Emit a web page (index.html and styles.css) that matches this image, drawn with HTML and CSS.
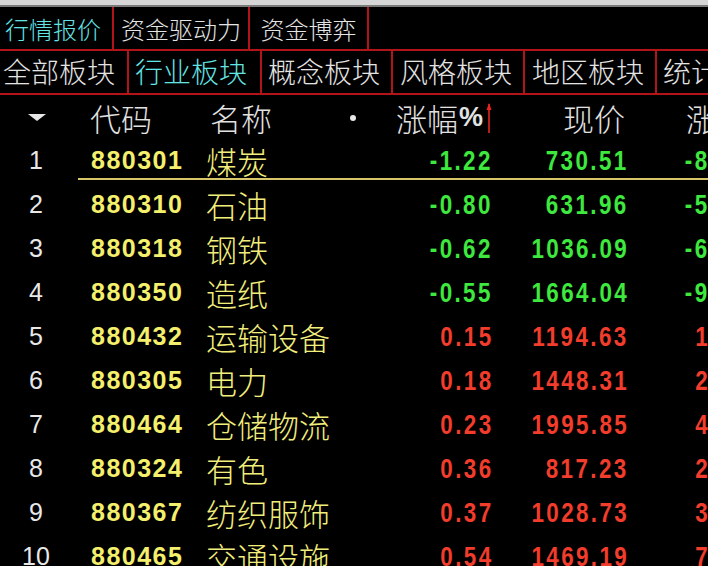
FILE: index.html
```html
<!DOCTYPE html>
<html lang="zh-CN">
<head>
<meta charset="utf-8">
<title>行业板块</title>
<link rel="stylesheet" href="styles.css">
</head>
<body>
<div class="screen">
  <div class="topband"></div>
  <div class="tabs tabs-main">
    <div class="tab t1 active">行情报价</div>
    <div class="tab t2">资金驱动力</div>
    <div class="tab t3">资金博弈</div>
  </div>
  <div class="tabs tabs-sub">
    <div class="tab s1">全部板块</div>
    <div class="tab s2 active">行业板块</div>
    <div class="tab s3">概念板块</div>
    <div class="tab s4">风格板块</div>
    <div class="tab s5">地区板块</div>
    <div class="tab s6">统计指标</div>
  </div>
  <div class="grid head">
    <div class="c idx"><svg class="tri" width="18" height="7" viewBox="0 0 18 7"><polygon points="0,0 18,0 9,7" fill="#e6e6e6"/></svg></div>
    <div class="c code">代码</div>
    <div class="c name"><span>名称</span><span class="dot"></span></div>
    <div class="c pct"><span>涨幅</span><span class="pc">%</span><svg class="arrow" width="6" height="32" viewBox="0 0 6 32"><path d="M3 2 L3 31" stroke="#e8241c" stroke-width="1.6"/><path d="M0.5 8 L3 1 L5.5 8 Z" fill="#e8241c"/></svg></div>
    <div class="c price">现价</div>
    <div class="c chg">涨跌</div>
  </div>
  <div class="rows">
    <div class="grid row sel">
      <div class="c idx">1</div><div class="c code">880301</div><div class="c name">煤炭</div>
      <div class="c pct num dn"><span>-1.22</span></div><div class="c price num dn"><span>730.51</span></div><div class="c chg num dn"><span>-8.99</span></div>
    </div>
    <div class="grid row">
      <div class="c idx">2</div><div class="c code">880310</div><div class="c name">石油</div>
      <div class="c pct num dn"><span>-0.80</span></div><div class="c price num dn"><span>631.96</span></div><div class="c chg num dn"><span>-5.10</span></div>
    </div>
    <div class="grid row">
      <div class="c idx">3</div><div class="c code">880318</div><div class="c name">钢铁</div>
      <div class="c pct num dn"><span>-0.62</span></div><div class="c price num dn"><span>1036.09</span></div><div class="c chg num dn"><span>-6.46</span></div>
    </div>
    <div class="grid row">
      <div class="c idx">4</div><div class="c code">880350</div><div class="c name">造纸</div>
      <div class="c pct num dn"><span>-0.55</span></div><div class="c price num dn"><span>1664.04</span></div><div class="c chg num dn"><span>-9.20</span></div>
    </div>
    <div class="grid row">
      <div class="c idx">5</div><div class="c code">880432</div><div class="c name">运输设备</div>
      <div class="c pct num up"><span>0.15</span></div><div class="c price num up"><span>1194.63</span></div><div class="c chg num up"><span>1.79</span></div>
    </div>
    <div class="grid row">
      <div class="c idx">6</div><div class="c code">880305</div><div class="c name">电力</div>
      <div class="c pct num up"><span>0.18</span></div><div class="c price num up"><span>1448.31</span></div><div class="c chg num up"><span>2.60</span></div>
    </div>
    <div class="grid row">
      <div class="c idx">7</div><div class="c code">880464</div><div class="c name">仓储物流</div>
      <div class="c pct num up"><span>0.23</span></div><div class="c price num up"><span>1995.85</span></div><div class="c chg num up"><span>4.58</span></div>
    </div>
    <div class="grid row">
      <div class="c idx">8</div><div class="c code">880324</div><div class="c name">有色</div>
      <div class="c pct num up"><span>0.36</span></div><div class="c price num up"><span>817.23</span></div><div class="c chg num up"><span>2.93</span></div>
    </div>
    <div class="grid row">
      <div class="c idx">9</div><div class="c code">880367</div><div class="c name">纺织服饰</div>
      <div class="c pct num up"><span>0.37</span></div><div class="c price num up"><span>1028.73</span></div><div class="c chg num up"><span>3.79</span></div>
    </div>
    <div class="grid row">
      <div class="c idx">10</div><div class="c code">880465</div><div class="c name">交通设施</div>
      <div class="c pct num up"><span>0.54</span></div><div class="c price num up"><span>1469.19</span></div><div class="c chg num up"><span>7.89</span></div>
    </div>
  </div>
</div>
</body>
</html>
```
FILE: styles.css
```css
html, body {
  margin: 0;
  padding: 0;
  background: #000;
  overflow: hidden;
}
body {
  width: 708px;
  height: 566px;
  font-family: "Noto Sans CJK SC", "Liberation Sans", sans-serif;
  color: #e4e4e4;
}
.screen {
  width: 800px;
}
.topband {
  height: 5px;
  background: #d6d6d6;
  border-bottom: 2px solid #7a7a7a;
}
.tabs {
  display: flex;
  border-bottom: 2px solid #b3141a;
  box-sizing: border-box;
}
.tabs-main {
  height: 44px;
}
.tabs-sub {
  height: 44px;
}
.tab {
  flex-shrink: 0;
  box-sizing: border-box;
  border-right: 2px solid #b3141a;
  white-space: nowrap;
  overflow: hidden;
  display: flex;
  align-items: center;
  font-weight: 300;
}
.tabs-main .tab {
  font-size: 24px;
  justify-content: center;
}
.tabs-main .t1 { width: 114px; padding-right: 6px; }
.tabs-main .t2 { width: 136px; }
.tabs-main .t3 { width: 119px; }
.tabs-sub .tab {
  font-size: 28px;
  padding-left: 6px;
  padding-bottom: 3px;
}
.tabs-sub .s1 { width: 129px; padding-left: 3px; }
.tabs-sub .s2 { width: 133px; }
.tabs-sub .s3 { width: 131px; }
.tabs-sub .s4 { width: 132px; padding-left: 7px; }
.tabs-sub .s5 { width: 132px; padding-left: 7px; }
.tabs-sub .s6 { width: 130px; border-right: none; }
.tab.active {
  color: #62e4e4;
}
.grid {
  display: grid;
  grid-template-columns: 72px 134px 194px 93px 136px 119px;
  width: 748px;
}
.c {
  white-space: nowrap;
  display: flex;
  align-items: center;
}
.head {
  height: 43px;
  box-sizing: border-box;
  padding-bottom: 5px;
  font-size: 31px;
  font-weight: 300;
  color: #e2e2e2;
}
.head .idx {
  justify-content: center;
  padding-left: 2px;
}
.tri {
  display: block;
  flex-shrink: 0;
}
.head .code {
  padding-left: 18px;
}
.head .name {
  padding-left: 4px;
}
.dot {
  flex-shrink: 0;
  width: 6px;
  height: 6px;
  border-radius: 50%;
  background: #e8e8e8;
  margin-left: auto;
  margin-right: 44px;
}
.head .pct {
  justify-content: flex-end;
  padding-right: 1px;
}
.pc {
  font-family: "Liberation Sans", sans-serif;
  font-weight: bold;
  font-size: 27px;
  margin-left: 1px;
}
.arrow {
  display: block;
  flex-shrink: 0;
  margin-left: 3px;
}
.head .price {
  justify-content: flex-end;
  padding-right: 4px;
}
.head .chg {
  justify-content: flex-end;
}
.row {
  height: 44px;
  position: relative;
}
.row.sel::after {
  content: "";
  position: absolute;
  left: 78px;
  right: 0;
  bottom: 2px;
  height: 2px;
  background: #d8c66a;
}
.row .idx {
  justify-content: center;
  font-family: "Liberation Sans", sans-serif;
  font-size: 25px;
  color: #e8e8e8;
}
.row .code {
  padding-left: 19px;
  font-family: "Liberation Sans", sans-serif;
  font-weight: bold;
  font-size: 25px;
  letter-spacing: 1.5px;
  color: #f4ef6c;
}
.row .name {
  font-size: 31px;
  font-weight: 300;
  color: #f2ee7c;
}
.num {
  justify-content: flex-end;
  font-family: "Liberation Sans", sans-serif;
  font-weight: bold;
  font-size: 28px;
  letter-spacing: 3px;
}
.num span {
  display: inline-block;
  transform: scaleX(0.8);
  transform-origin: right center;
}
.dn { color: #3ee83e; }
.up { color: #f23c2c; }
```
